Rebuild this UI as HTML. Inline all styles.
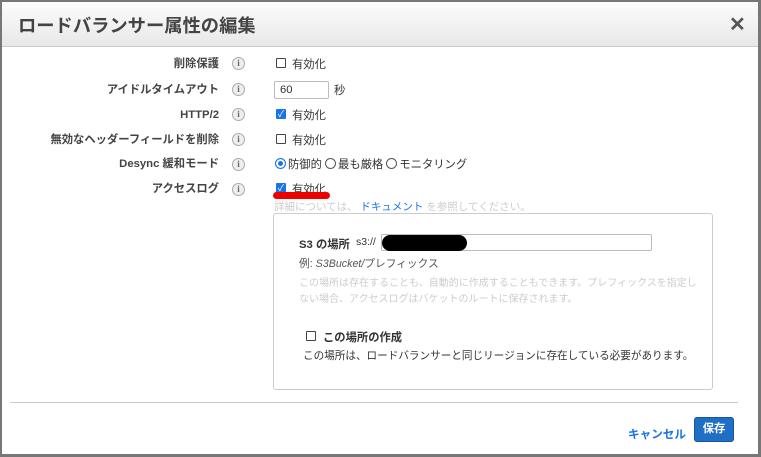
<!DOCTYPE html>
<html><head><meta charset="utf-8"><style>
*{margin:0;padding:0;box-sizing:border-box}
body{width:761px;height:457px;background:#777;font-family:"Liberation Sans","Noto Sans CJK JP",sans-serif;font-size:11.3px;color:#333;position:relative;overflow:hidden}
#p{position:absolute;left:2px;top:2px;width:756px;height:452px;background:#fff}
#h{position:absolute;left:0;top:0;width:756px;height:45px;background:linear-gradient(#fcfcfc,#e8e8e8);border-bottom:1px solid #ccc}
#h .t{position:absolute;left:16px;top:10px;font-size:18.3px;color:#444;font-weight:bold}
#h .x{position:absolute;left:727px;top:10px;font-size:20px;color:#555;font-weight:bold}
.a{position:absolute;white-space:nowrap}
.l{right:539px;text-align:right;font-weight:bold;color:#444;height:16px;line-height:16px}
.i{width:13px;height:13px;border:1px solid #aaa;border-radius:50%;background:#eee;font-size:9px;color:#666;text-align:center;line-height:11px;font-family:"Liberation Serif",serif;font-weight:bold;left:230px}
.cb{width:10px;height:10px;border:1px solid #444;border-radius:1px;background:#fff}
.cb.on{background:#1a73e8;border-color:#1a73e8;color:#fff;font-size:9px;line-height:8px;text-align:center}
.r{width:11px;height:11px;border:1px solid #555;border-radius:50%;display:inline-block;vertical-align:-1px;margin-right:2px}
.r.on{border-color:#1a73e8;box-shadow:inset 0 0 0 2px #fff;background:#1a73e8}
</style></head><body><div id="p">
<div id="h"><div class="t">ロードバランサー属性の編集</div><div class="x">✕</div></div>

<div class="a l" style="top:54px">削除保護</div><div class="a i" style="top:55px">i</div>
<div class="a cb" style="left:274px;top:56px"></div><div class="a" style="left:290px;top:54px">有効化</div>

<div class="a l" style="top:80px">アイドルタイムアウト</div><div class="a i" style="top:81px">i</div>
<div class="a" style="left:272px;top:79px;width:55px;height:18px;border:1px solid #bbb;border-radius:2px;padding:2px 5px">60</div><div class="a" style="left:332px;top:80px">秒</div>

<div class="a l" style="top:105px">HTTP/2</div><div class="a i" style="top:106px">i</div>
<div class="a cb on" style="left:274px;top:107px">✓</div><div class="a" style="left:290px;top:105px">有効化</div>

<div class="a l" style="top:130px">無効なヘッダーフィールドを削除</div><div class="a i" style="top:131px">i</div>
<div class="a cb" style="left:274px;top:132px"></div><div class="a" style="left:290px;top:130px">有効化</div>

<div class="a l" style="top:154px">Desync 緩和モード</div><div class="a i" style="top:156px">i</div>
<div class="a" style="left:273px;top:154px"><span class="r on"></span>防御的 <span class="r"></span>最も厳格 <span class="r"></span>モニタリング</div>

<div class="a l" style="top:179px">アクセスログ</div><div class="a i" style="top:181px">i</div>
<div class="a cb on" style="left:274px;top:181px">✓</div><div class="a" style="left:290px;top:179px">有効化</div>
<div class="a" style="left:271px;top:190px;width:57px;height:7px;background:#e00;border-radius:4px"></div>
<div class="a" style="left:272px;top:197px;font-size:10.5px;color:#ccc">詳細については、 <span style="color:#1a73e8">ドキュメント</span> を参照してください。</div>

<div class="a" style="left:271px;top:211px;width:440px;height:177px;border:1px solid #ccc;border-radius:3px"></div>
<div class="a" style="left:297px;top:234px;font-weight:bold;color:#333">S3 の場所</div>
<div class="a" style="left:354px;top:234px;font-size:10.5px">s3://</div>
<div class="a" style="left:379px;top:232px;width:271px;height:17px;border:1px solid #bbb;border-radius:2px"></div>
<div class="a" style="left:380px;top:233px;width:85px;height:16px;background:#000;border-radius:8px"></div>
<div class="a" style="left:297px;top:254px;font-size:10.7px;color:#555">例: <i>S3Bucket/</i>プレフィックス</div>
<div class="a" style="left:297px;top:274px;font-size:10px;color:#ccc;line-height:16px">この場所は存在することも、自動的に作成することもできます。プレフィックスを指定し<br>ない場合、アクセスログはバケットのルートに保存されます。</div>
<div class="a cb" style="left:304px;top:329px"></div><div class="a" style="left:321px;top:327px;font-weight:bold">この場所の作成</div>
<div class="a" style="left:301px;top:346px;font-size:10.6px">この場所は、ロードバランサーと同じリージョンに存在している必要があります。</div>

<div class="a" style="left:8px;top:400px;width:728px;height:1px;background:#ccc"></div>
<div class="a" style="left:626px;top:424px;font-size:11.6px;font-weight:bold;color:#1a73e8">キャンセル</div>
<div class="a" style="left:692px;top:415px;width:40px;height:25px;background:#1f6fc7;border:1px solid #15559e;border-radius:3px;color:#fff;font-weight:bold;text-align:center;line-height:23px">保存</div>
</div></body></html>
